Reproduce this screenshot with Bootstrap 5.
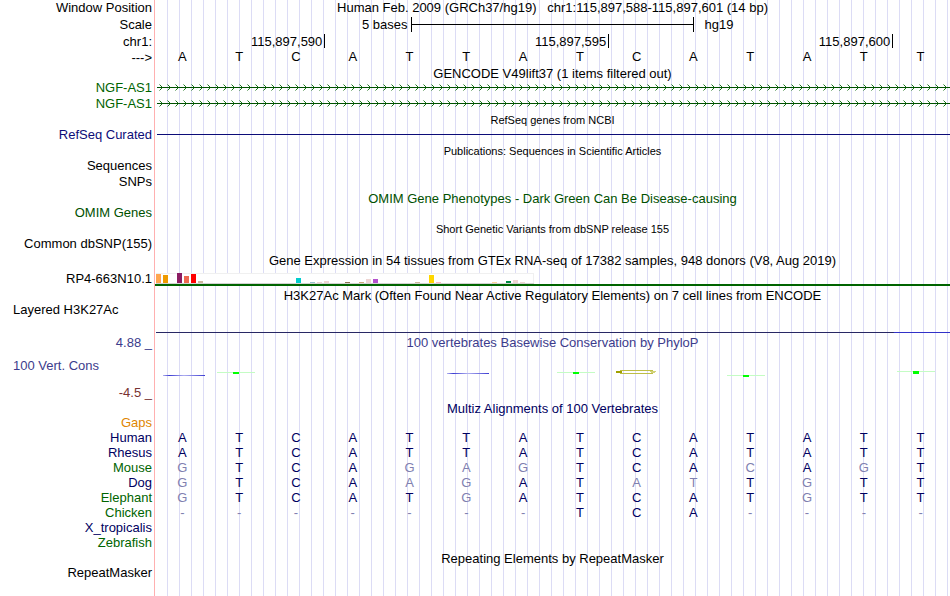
<!DOCTYPE html>
<html lang="en">
<head>
  <meta charset="UTF-8" />
  <meta name="viewport" content="width=device-width, initial-scale=1.0"/>
  <title>Human chr1:115,897,588-115,897,601 Genome Browser</title>
  <link href="https://cdn.jsdelivr.net/npm/bootstrap@5.3.3/dist/css/bootstrap.min.css" rel="stylesheet">
  <style>
    body { font-family: "Liberation Sans", Arial, sans-serif; font-size: 13px; line-height: 15px; color: #000; }
    /* pink label divider, then a guide line every 12px */
    .browser {
      background:
        linear-gradient(#ffb0b0, #ffb0b0) 154px 0 / 1px 100% no-repeat,
        repeating-linear-gradient(90deg, #dcdcf5 0 1px, transparent 1px 12px) 167px 0 no-repeat;
    }
    .track { min-height: 15px; }
    .tall { min-height: 16px; }
    .track-label { width: 155px; padding-right: 3px; flex-shrink: 0; text-align: right; white-space: nowrap; }
    .track-label.start, .cons-name { text-align: left; padding-left: 13px; }
    .track-data { flex: 1 1 0; min-width: 0; text-align: center; white-space: nowrap; }
    .track-data svg { display: block; width: 100%; }
    .track-title { padding-top: 2px; line-height: 13px; }
    .fine { font-size: 11px; }
    .bases { display: grid; grid-template-columns: repeat(14, 1fr); }
    .base { padding-right: 2px; }
    .sequence { line-height: 13px; }
    .ruler { display: grid; grid-template-columns: repeat(28, 1fr); }
    .ruler-row { padding: 1px 0 2px; }
    .scale-text { grid-column: 1 / 10; padding-right: 3px; }
    .scale-bar { grid-column: 10 / 20; height: 15px; border: solid #000; border-width: 0 1px; }
    .scale-bar::before { content: ""; display: block; height: 8px; border-bottom: 1px solid #000; }
    .scale-db { grid-column: 20 / 29; padding-left: 10px; }
    .tick { height: 14px; border-right: 1px solid #000; padding-right: 2px; text-align: right; }
    .tick-a { grid-column: 1 / 4; }
    .tick-b { grid-column: 4 / 9; }
    .tick-c { grid-column: 9 / 14; }
    .gene { color: #006400; }
    .navy { color: #00005f; }
    .refseq { color: #0c0c78; }
    .omim { color: #005000; }
    .cons { color: #3c3c8c; }
    .neg { color: #783232; }
    .gaps { color: #e08600; }
    .differs { color: #8080b0; }
    .gtex { min-height: 18px; border-bottom: 2px solid #006400; }
    .gtex-label { padding-top: 3px; }
    .h3k-title { padding-top: 1px; }
  </style>
</head>
<body class="bg-white">

  <main class="browser min-vh-100">
    <!-- Position and ruler -->
    <div class="track tall d-flex">
      <div class="track-label">Window Position</div>
      <div class="track-data">Human Feb. 2009 (GRCh37/hg19) &nbsp; chr1:115,897,588-115,897,601 (14 bp)</div>
    </div>
    <div class="track d-flex ruler-row">
      <div class="track-label">Scale</div>
      <div class="track-data ruler">
        <div class="scale-text text-end">5 bases</div>
        <div class="scale-bar"></div>
        <div class="scale-db text-start">hg19</div>
      </div>
    </div>
    <div class="track tall d-flex">
      <div class="track-label">chr1:</div>
      <div class="track-data bases">
        <div class="tick tick-a">115,897,590</div>
        <div class="tick tick-b">115,897,595</div>
        <div class="tick tick-c">115,897,600</div>
      </div>
    </div>
    <div class="track d-flex">
      <div class="track-label">---&gt;</div>
      <div class="track-data bases sequence" data-seq="ATCATTATCATATT"></div>
    </div>

    <!-- GENCODE -->
    <div class="track d-flex">
      <div class="track-label"></div>
      <div class="track-data track-title">GENCODE V49lift37 (1 items filtered out)</div>
    </div>
    <div class="track tall d-flex gene">
      <div class="track-label">NGF-AS1</div>
      <div class="track-data">
        <svg height="15">
          <defs>
            <pattern id="strand" width="8" height="15" patternUnits="userSpaceOnUse">
              <path d="M4.5 4.5L7.5 7.5L4.5 10.5" fill="none" stroke="#006400" stroke-width="0.9"/>
            </pattern>
          </defs>
          <rect x="2" y="7" width="100%" height="1" fill="#005000"/>
          <rect x="2" width="100%" height="15" fill="url(#strand)"/>
        </svg>
      </div>
    </div>
    <div class="track tall d-flex gene">
      <div class="track-label">NGF-AS1</div>
      <div class="track-data">
        <svg height="15">
          <rect x="2" y="7" width="100%" height="1" fill="#005000"/>
          <rect x="2" width="100%" height="15" fill="url(#strand)"/>
        </svg>
      </div>
    </div>

    <!-- RefSeq -->
    <div class="track d-flex">
      <div class="track-label"></div>
      <div class="track-data track-title fine">RefSeq genes from NCBI</div>
    </div>
    <div class="track tall d-flex refseq">
      <div class="track-label">RefSeq Curated</div>
      <div class="track-data">
        <svg height="15"><rect x="2" y="7" width="100%" height="1" fill="#0c0c78"/></svg>
      </div>
    </div>

    <!-- Publications -->
    <div class="track d-flex">
      <div class="track-label"></div>
      <div class="track-data track-title fine">Publications: Sequences in Scientific Articles</div>
    </div>
    <div class="track tall d-flex"><div class="track-label">Sequences</div></div>
    <div class="track tall d-flex"><div class="track-label">SNPs</div></div>

    <!-- OMIM -->
    <div class="track d-flex omim">
      <div class="track-label"></div>
      <div class="track-data track-title">OMIM Gene Phenotypes - Dark Green Can Be Disease-causing</div>
    </div>
    <div class="track tall d-flex omim"><div class="track-label">OMIM Genes</div></div>

    <!-- dbSNP -->
    <div class="track d-flex">
      <div class="track-label"></div>
      <div class="track-data track-title fine">Short Genetic Variants from dbSNP release 155</div>
    </div>
    <div class="track tall d-flex"><div class="track-label">Common dbSNP(155)</div></div>

    <!-- GTEx -->
    <div class="track tall d-flex">
      <div class="track-label"></div>
      <div class="track-data track-title">Gene Expression in 54 tissues from GTEx RNA-seq of 17382 samples, 948 donors (V8, Aug 2019)</div>
    </div>
    <div class="track d-flex align-items-start">
      <div class="track-label gtex-label">RP4-663N10.1</div>
      <div class="track-data gtex"><svg height="16" id="gtexBars"></svg></div>
    </div>

    <!-- H3K27Ac -->
    <div class="track d-flex h3k-title">
      <div class="track-label"></div>
      <div class="track-data track-title">H3K27Ac Mark (Often Found Near Active Regulatory Elements) on 7 cell lines from ENCODE</div>
    </div>
    <div class="track d-flex">
      <div class="track-label start">Layered H3K27Ac</div>
      <div class="track-data">
        <svg height="33">
          <rect x="1" y="30" width="100%" height="1" fill="#3232c8"/>
          <rect x="1" y="30" width="92.8%" height="1" fill="#282864"/>
        </svg>
      </div>
    </div>

    <!-- Conservation -->
    <div class="track d-flex cons">
      <div class="track-label">4.88 _</div>
      <div class="track-data">100 vertebrates Basewise Conservation by PhyloP</div>
    </div>
    <div class="track d-flex">
      <div class="track-label d-flex flex-column justify-content-between pt-2">
        <div class="cons cons-name">100 Vert. Cons</div>
        <div class="neg">-4.5 _</div>
      </div>
      <div class="track-data">
        <svg height="50" viewBox="0 0 795 50" preserveAspectRatio="none">
          <defs>
            <linearGradient id="fade">
              <stop offset="0" stop-color="#b4b4f0"/>
              <stop offset="0.15" stop-color="#3c3cd2"/>
              <stop offset="0.5" stop-color="#b0b0f0"/>
              <stop offset="1" stop-color="#3c3cd2"/>
            </linearGradient>
          </defs>
          <rect x="8" y="25" width="42" height="1" fill="url(#fade)"/>
          <rect x="292" y="23" width="42" height="1" fill="url(#fade)"/>
          <g fill="#c4fcc4">
            <rect x="62" y="22" width="38" height="1"/>
            <rect x="402" y="22" width="38" height="1"/>
            <rect x="572" y="25" width="38" height="1"/>
            <rect x="742" y="21" width="38" height="1"/>
          </g>
          <g fill="#00ff00">
            <rect x="78" y="22" width="6" height="2"/>
            <rect x="418" y="22" width="6" height="2"/>
            <rect x="588" y="25" width="6" height="2"/>
            <rect x="758" y="21" width="6" height="3"/>
          </g>
          <path d="M465 20.5H498M465 23.5H498" fill="none" stroke="#bebe46"/>
          <path d="M495 21.5H501M496 22.5H500" fill="none" stroke="#d2d278"/>
          <path d="M461 21H467V23H461Z" fill="#a0a000"/>
        </svg>
      </div>
    </div>

    <!-- Multiz -->
    <div class="track d-flex navy">
      <div class="track-label"></div>
      <div class="track-data track-title">Multiz Alignments of 100 Vertebrates</div>
    </div>
    <div class="track d-flex gaps"><div class="track-label">Gaps</div></div>
    <div id="alignments"></div>

    <!-- RepeatMasker -->
    <div class="track d-flex">
      <div class="track-label"></div>
      <div class="track-data track-title">Repeating Elements by RepeatMasker</div>
    </div>
    <div class="track d-flex"><div class="track-label">RepeatMasker</div></div>
  </main>

  <!-- Scripts -->
  <script src="https://cdn.jsdelivr.net/npm/bootstrap@5.3.3/dist/js/bootstrap.bundle.min.js"></script>
  <script>
    const human = "ATCATTATCATATT";
    const species = [
      { name: "Human", seq: human },
      { name: "Rhesus", seq: "ATCATTATCATATT" },
      { name: "Mouse", seq: "GTCAGAGTCACAGT" },
      { name: "Dog", seq: "GTCAAGATATTGTT" },
      { name: "Elephant", seq: "GTCATGATCATGTT" },
      { name: "Chicken", seq: "-------TCA----" },
      { name: "X_tropicalis", seq: "" },
      { name: "Zebrafish", seq: "" }
    ];
    const greenNames = ["Mouse", "Elephant", "Chicken", "Zebrafish"];

    // Bases that differ from human are drawn lighter
    function baseCells(seq) {
      return [...seq].map((base, i) =>
        `<div class="base ${base === human[i] ? "" : "differs"}">${base}</div>`).join("");
    }

    document.querySelectorAll("[data-seq]").forEach(el => {
      el.innerHTML = baseCells(el.dataset.seq);
    });

    document.getElementById("alignments").innerHTML = species.map(s => `
      <div class="track d-flex navy">
        <div class="track-label ${greenNames.includes(s.name) ? "gene" : ""}">${s.name}</div>
        <div class="track-data bases">${baseCells(s.seq)}</div>
      </div>`).join("");

    // [tissue slot, bar height, colour]
    const tissues = [
      [0, 9, "#ffa54f"], [1, 8, "#ee9a00"], [3, 10, "#8b1c62"], [4, 7, "#ee6a50"],
      [5, 9, "#ff0000"], [6, 2, "#cdb79e"], [20, 5, "#00cdcd"], [22, 1, "#9ac0cd"],
      [23, 1, "#eed5d2"], [24, 2, "#eed5d2"], [27, 1, "#8b7355"], [29, 1, "#cdaa7d"],
      [30, 4, "#eed5d2"], [31, 4, "#b452cd"], [37, 1, "#cdb79e"], [39, 8, "#ffd700"],
      [40, 1, "#ffb6c1"], [48, 1, "#ffd39b"], [50, 2, "#008b45"], [51, 3, "#eed5d2"],
      [52, 1, "#eed5d2"]
    ];
    document.getElementById("gtexBars").innerHTML =
      `<rect x="1" y="5" width="378" height="11" fill="#f0f0f0"/>
       <rect x="1" y="6" width="377" height="9" fill="#fff"/>
       <rect x="1" y="15" width="378" height="1" fill="#d2d2d2"/>` +
      tissues.map(([slot, h, color]) =>
        `<rect x="${1 + slot * 7}" y="${15 - h}" width="5" height="${h}" fill="${color}"/>`).join("");
  </script>
</body>
</html>
